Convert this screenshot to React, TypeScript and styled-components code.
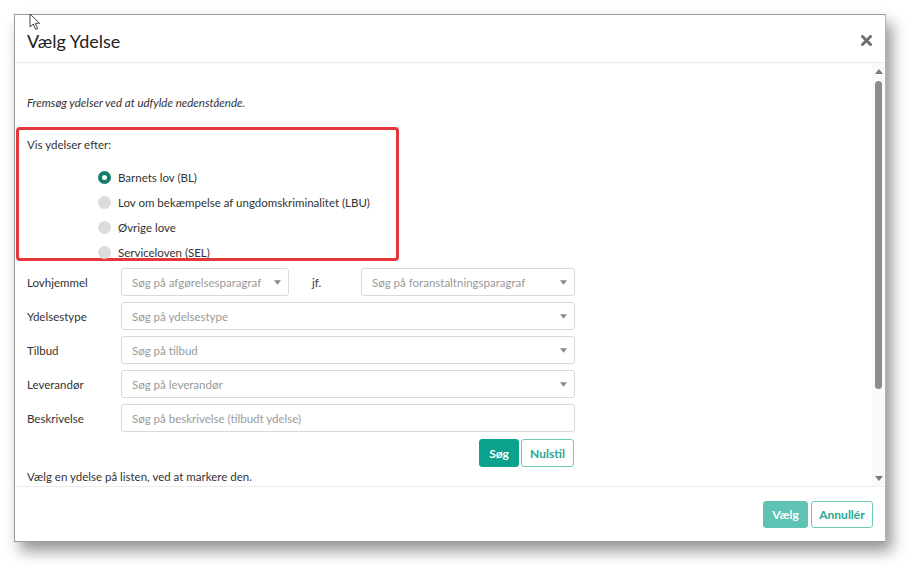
import styled, { createGlobalStyle } from "styled-components";

const GlobalStyle = createGlobalStyle`
  html, body {
    margin: 0;
    padding: 0;
    background: #ffffff;
  }
  * {
    box-sizing: border-box;
  }
`;

const lawOptions = [
  "Barnets lov (BL)",
  "Lov om bekæmpelse af ungdomskriminalitet (LBU)",
  "Øvrige love",
  "Serviceloven (SEL)",
];

const selectRows = [
  { label: "Ydelsestype", placeholder: "Søg på ydelsestype" },
  { label: "Tilbud", placeholder: "Søg på tilbud" },
  { label: "Leverandør", placeholder: "Søg på leverandør" },
];

const Caret = () => (
  <CaretIcon viewBox="0 0 8 5" aria-hidden>
    <path d="M0 0 L8 0 L4 5 Z" fill="#8a8a8a" />
  </CaretIcon>
);

const App = () => {
  return (
    <Page>
      <GlobalStyle />
      <Modal>
        <Header>
          <Title>Vælg Ydelse</Title>
          <CloseButton aria-label="Luk">
            <svg width="11" height="11" viewBox="0 0 11 11">
              <path
                d="M1.5 1.5 L9.5 9.5 M9.5 1.5 L1.5 9.5"
                stroke="#6e6e6e"
                strokeWidth="3"
                strokeLinecap="round"
              />
            </svg>
          </CloseButton>
        </Header>

        <Body>
          <Content>
            <Intro>Fremsøg ydelser ved at udfylde nedenstående.</Intro>

            <HighlightBox>
              <Text>Vis ydelser efter:</Text>
              <RadioList>
                {lawOptions.map((option, i) => (
                  <RadioRow key={option}>
                    <RadioDot checked={i === 0} />
                    <Text>{option}</Text>
                  </RadioRow>
                ))}
              </RadioList>
            </HighlightBox>

            <Form>
              <FormRow>
                <Label>Lovhjemmel</Label>
                <Select width="168px">
                  <Placeholder>Søg på afgørelsesparagraf</Placeholder>
                  <Caret />
                </Select>
                <Joiner>jf.</Joiner>
                <Select>
                  <Placeholder>Søg på foranstaltningsparagraf</Placeholder>
                  <Caret />
                </Select>
              </FormRow>
              {selectRows.map(({ label, placeholder }) => (
                <FormRow key={label}>
                  <Label>{label}</Label>
                  <Select>
                    <Placeholder>{placeholder}</Placeholder>
                    <Caret />
                  </Select>
                </FormRow>
              ))}
              <FormRow>
                <Label>Beskrivelse</Label>
                <Input placeholder="Søg på beskrivelse (tilbudt ydelse)" />
              </FormRow>
              <ButtonRow>
                <Button primary width="40px">
                  Søg
                </Button>
                <Button width="53px">Nulstil</Button>
              </ButtonRow>
            </Form>

            <Hint>Vælg en ydelse på listen, ved at markere den.</Hint>
          </Content>

          <Scrollbar>
            <Arrow viewBox="0 0 8 5">
              <path d="M4 0 L8 5 L0 5 Z" fill="#7a7a7a" />
            </Arrow>
            <Track>
              <Thumb />
            </Track>
            <Arrow viewBox="0 0 8 5">
              <path d="M0 0 L8 0 L4 5 Z" fill="#7a7a7a" />
            </Arrow>
          </Scrollbar>
        </Body>

        <Footer>
          <Button primary muted width="45px" height="27px">
            Vælg
          </Button>
          <Button width="62px" height="27px">
            Annullér
          </Button>
        </Footer>
      </Modal>

      <Cursor viewBox="0 0 12 18" aria-hidden>
        <path
          d="M1 1 L1 14 L4.2 11 L6.6 16.4 L8.6 15.5 L6.3 10.3 L10.6 10.3 Z"
          fill="#ffffff"
          stroke="#444"
          strokeWidth="1"
          strokeLinejoin="round"
        />
      </Cursor>
    </Page>
  );
};

export default App;

const Page = styled.div`
  position: relative;
  width: 920px;
  height: 577px;
  padding: 14px 0 0 14px;
  font-family: "Lato", "Open Sans", sans-serif;
  color: #333;
`;

const Modal = styled.div`
  width: 872px;
  height: 528px;
  display: flex;
  flex-direction: column;
  background: #fff;
  border: 1px solid #9a9a9a;
  border-right-color: #b5b5b5;
  box-shadow: 6px 9px 14px rgba(0, 0, 0, 0.42);
`;

const Header = styled.div`
  height: 48px;
  flex-shrink: 0;
  display: flex;
  align-items: center;
  justify-content: space-between;
  padding: 4px 12px 0 12px;
  border-bottom: 1px solid #ececec;
`;

const Title = styled.h4`
  margin: 0;
  font-size: 18px;
  font-weight: 400;
  color: #222;
`;

const CloseButton = styled.button`
  display: flex;
  align-items: center;
  justify-content: center;
  padding: 0;
  margin: 0;
  border: none;
  background: none;
  width: 14px;
  height: 14px;
`;

const Body = styled.div`
  flex: 1;
  display: flex;
  overflow: hidden;
  border-bottom: 1px solid #ededed;
`;

const Content = styled.div`
  flex: 1;
  padding: 32px 0 0 12px;
  overflow: hidden;
`;

const Text = styled.span`
  font-size: 11.5px;
  line-height: 16px;
  color: #333;
`;

const Intro = styled.p`
  margin: 0;
  font-size: 11.5px;
  line-height: 16px;
  font-style: italic;
  color: #333;
`;

const HighlightBox = styled.div`
  margin: 16px 0 0 -11px;
  width: 383px;
  height: 134px;
  padding: 3px 0 0 8px;
  border: 3px solid #e4363b;
  border-radius: 4px;
`;

const RadioList = styled.div`
  margin-top: 12px;
  padding-left: 71px;
  display: flex;
  flex-direction: column;
`;

const RadioRow = styled.label`
  height: 25px;
  display: flex;
  align-items: center;
  gap: 7px;
`;

const RadioDot = styled.span<{ checked?: boolean }>`
  width: 13px;
  height: 13px;
  border-radius: 50%;
  flex-shrink: 0;
  background: ${({ checked }) => (checked ? "#fff" : "#dcdcdc")};
  border: ${({ checked }) => (checked ? "4px solid #137d6d" : "none")};
`;

const Form = styled.div`
  margin-top: 7px;
  width: 548px;
  display: flex;
  flex-direction: column;
  gap: 6px;
`;

const FormRow = styled.div`
  display: flex;
  align-items: center;
  height: 28px;
`;

const Label = styled.span`
  width: 94px;
  flex-shrink: 0;
  font-size: 11.5px;
  color: #333;
`;

const Joiner = styled.span`
  width: 72px;
  flex-shrink: 0;
  padding-left: 23px;
  font-size: 11.5px;
  color: #333;
`;

const Select = styled.div<{ width?: string }>`
  ${({ width }) => (width ? `width: ${width}; flex-shrink: 0;` : "flex: 1;")}
  height: 28px;
  display: flex;
  align-items: center;
  justify-content: space-between;
  padding: 0 7px 0 10px;
  border: 1px solid #dadada;
  border-radius: 3px;
  background: #fff;
`;

const Placeholder = styled.span`
  font-size: 11.5px;
  color: #9a9a9a;
  white-space: nowrap;
`;

const CaretIcon = styled.svg`
  width: 7px;
  height: 5px;
`;

const Input = styled.input`
  flex: 1;
  height: 28px;
  padding: 0 10px;
  border: 1px solid #dadada;
  border-radius: 3px;
  font-family: inherit;
  font-size: 11.5px;
  color: #333;
  outline: none;
  &::placeholder {
    color: #9a9a9a;
  }
`;

const ButtonRow = styled.div`
  display: flex;
  justify-content: flex-end;
  gap: 2px;
  margin-top: 1px;
  padding-right: 1px;
`;

const Button = styled.button<{
  primary?: boolean;
  muted?: boolean;
  width?: string;
  height?: string;
}>`
  width: ${({ width }) => width || "auto"};
  height: ${({ height }) => height || "28px"};
  padding: 0;
  font-family: inherit;
  font-size: 12px;
  font-weight: 700;
  border-radius: 3px;
  cursor: pointer;
  background: ${({ primary, muted }) =>
    primary ? (muted ? "#5ec3b3" : "#0aa18d") : "#fff"};
  color: ${({ primary }) => (primary ? "#fff" : "#2aa792")};
  border: 1px solid
    ${({ primary, muted }) =>
      primary ? (muted ? "#5ec3b3" : "#0aa18d") : "#6ccab9"};
`;

const Hint = styled.p`
  margin: 2px 0 0;
  font-size: 11.5px;
  line-height: 16px;
  color: #333;
`;

const Scrollbar = styled.div`
  width: 13px;
  flex-shrink: 0;
  display: flex;
  flex-direction: column;
  align-items: center;
  padding: 6px 0 5px;
  gap: 4px;
  background: #fafafa;
`;

const Arrow = styled.svg`
  width: 8px;
  height: 5px;
  flex-shrink: 0;
`;

const Track = styled.div`
  flex: 1;
  width: 7px;
  padding-top: 3px;
`;

const Thumb = styled.div`
  width: 7px;
  height: 308px;
  border-radius: 4px;
  background: #8c8c8c;
`;

const Footer = styled.div`
  height: 54px;
  flex-shrink: 0;
  display: flex;
  align-items: center;
  justify-content: flex-end;
  gap: 3px;
  padding-right: 12px;
`;

const Cursor = styled.svg`
  position: absolute;
  left: 29px;
  top: 13px;
  width: 12px;
  height: 18px;
`;
